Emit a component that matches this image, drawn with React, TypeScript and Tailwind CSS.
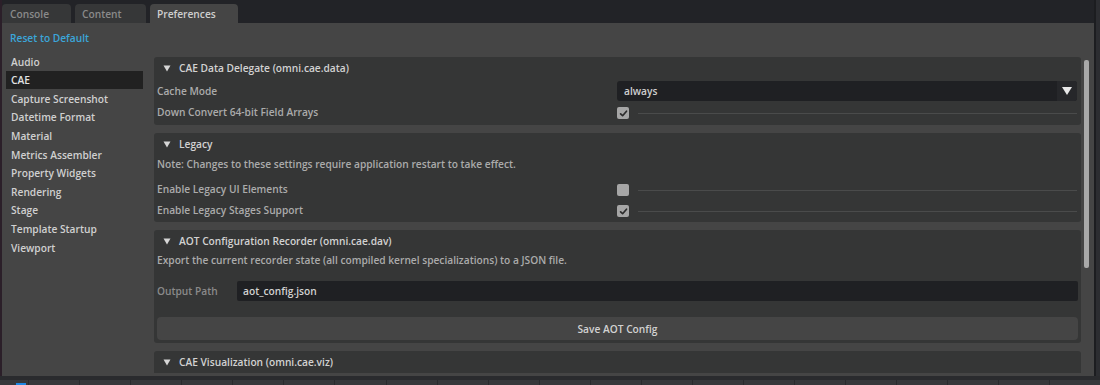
import React from "react";

const sidebarItems = [
  "Audio",
  "CAE",
  "Capture Screenshot",
  "Datetime Format",
  "Material",
  "Metrics Assembler",
  "Property Widgets",
  "Rendering",
  "Stage",
  "Template Startup",
  "Viewport",
];

function Caret() {
  return (
    <svg width="8" height="7" viewBox="0 0 8 7" className="mr-[8px] shrink-0">
      <path d="M0.5 0.5 H7.5 L4 6.5 Z" fill="#d6d6d6" />
    </svg>
  );
}

function SectionHeader({ title }: { title: string }) {
  return (
    <div className="flex h-[21px] items-center pl-[9px] pt-[2px] text-[#d2d2d2]">
      <Caret />
      <span>{title}</span>
    </div>
  );
}

function Checkbox({ checked }: { checked: boolean }) {
  return (
    <div className="flex h-full flex-1 items-center">
      <div className="flex h-[12px] w-[12px] items-center justify-center rounded-[2px] bg-[#a6a6a6]">
        {checked && (
          <svg width="9" height="9" viewBox="0 0 9 9">
            <path
              d="M1.6 4.8 L3.6 6.7 L7.5 2.2"
              fill="none"
              stroke="#2c2c2c"
              strokeWidth="1.7"
              strokeLinecap="round"
              strokeLinejoin="round"
            />
          </svg>
        )}
      </div>
      <div className="ml-[9px] h-px flex-1 bg-[#4a4b4b]" />
    </div>
  );
}

function Row({ label, children }: { label: string; children: React.ReactNode }) {
  return (
    <div className="flex h-[20px] items-center pt-[2px]">
      <div className="w-[460px] shrink-0 text-[#ababab]">{label}</div>
      {children}
    </div>
  );
}

export default function App() {
  return (
    <div
      className="flex h-[385px] w-[1100px] flex-col overflow-hidden bg-[#222327] text-[10.2px] font-semibold"
      style={{ fontFamily: '"Open Sans", "Liberation Sans", sans-serif' }}
    >
      <div className="flex h-[376px]">
        <div className="w-[2px] bg-[#2b1f29]" />
        <div className="flex w-[1092px] flex-col">
          {/* tab bar */}
          <div className="flex h-[23px] items-end gap-[4px]">
            <div className="flex h-[19px] w-[69px] items-center rounded-t-[4px] bg-[#363738] pl-[8px] pt-[2px] text-[#8a8a8a]">
              Console
            </div>
            <div className="flex h-[19px] w-[71px] items-center rounded-t-[4px] bg-[#363738] pl-[7px] pt-[2px] text-[#8a8a8a]">
              Content
            </div>
            <div className="flex h-[19px] w-[88px] items-center rounded-t-[4px] bg-[#454545] pl-[7px] pt-[2px] text-[#cfcfcf]">
              Preferences
            </div>
          </div>

          {/* body */}
          <div className="flex flex-1 flex-col overflow-hidden bg-[#454545] pb-[3px]">
            <div className="mt-[8px] flex h-[14px] items-center pl-[8px] pt-[2px] text-[#3ba6da]">Reset to Default</div>
            <div className="mt-[7px] flex min-h-0 flex-1">
              {/* sidebar */}
              <div className="ml-[4px] w-[137px] shrink-0">
                {sidebarItems.map((item) => (
                  <div
                    key={item}
                    className={
                      item === "CAE"
                        ? "flex h-[18.6px] items-center bg-[#212121] pl-[5px] pt-[2px] text-[#e2e2e2]"
                        : "flex h-[18.6px] items-center pl-[5px] pt-[2px] text-[#d0d0d0]"
                    }
                  >
                    {item}
                  </div>
                ))}
              </div>

              {/* content */}
              <div className="ml-[11px] flex min-h-0 flex-1 flex-col gap-[8px] overflow-hidden pt-[5px]">
                <div className="rounded-[3px] bg-[#353636] pb-[3px] pr-[4px]">
                  <SectionHeader title="CAE Data Delegate (omni.cae.data)" />
                  <div className="flex flex-col gap-[1px] pl-[3px] pt-[3px]">
                    <div className="flex h-[20px] items-center">
                      <div className="w-[460px] shrink-0 pt-[2px] text-[#ababab]">Cache Mode</div>
                      <div className="flex h-[20px] flex-1 items-center rounded-[3px] bg-[#1f2023]">
                        <span className="flex-1 pl-[7px] pt-[2px] text-[#cfcfcf]">always</span>
                        <div className="flex h-full w-[20px] items-center justify-center rounded-r-[3px] bg-[#26272a]">
                          <svg width="10" height="8" viewBox="0 0 10 8">
                            <path d="M0 0 H10 L5 8 Z" fill="#e8e8e8" />
                          </svg>
                        </div>
                      </div>
                    </div>
                    <Row label="Down Convert 64-bit Field Arrays">
                      <Checkbox checked />
                    </Row>
                  </div>
                </div>

                <div className="rounded-[3px] bg-[#353636] pb-[2px] pr-[4px]">
                  <SectionHeader title="Legacy" />
                  <div className="mt-[1px] flex h-[18px] items-center pl-[3px] pt-[2px] text-[#ababab]">
                    Note: Changes to these settings require application restart to take effect.
                  </div>
                  <div className="mt-[6px] flex flex-col gap-[1px] pl-[3px]">
                    <Row label="Enable Legacy UI Elements">
                      <Checkbox checked={false} />
                    </Row>
                    <Row label="Enable Legacy Stages Support">
                      <Checkbox checked />
                    </Row>
                  </div>
                </div>

                <div className="rounded-[3px] bg-[#353636] pb-[3px] pr-[3px]">
                  <SectionHeader title="AOT Configuration Recorder (omni.cae.dav)" />
                  <div className="flex h-[18px] items-center pl-[3px] pt-[2px] text-[#ababab]">
                    Export the current recorder state (all compiled kernel specializations) to a JSON file.
                  </div>
                  <div className="mt-[12px] flex h-[20px] items-center pl-[3px]">
                    <div className="w-[80px] shrink-0 pt-[2px] text-[#8a8a8a]">Output Path</div>
                    <div className="flex h-[20px] flex-1 items-center rounded-[2px] bg-[#1f2023] pl-[6px] pt-[2px] text-[#d2d2d2]">
                      aot_config.json
                    </div>
                  </div>
                  <div className="mt-[16px] pl-[3px]">
                    <div className="flex h-[23px] items-center justify-center rounded-[4px] bg-[#454545] pt-[2px] text-[#d2d2d2]">
                      Save AOT Config
                    </div>
                  </div>
                </div>

                <div className="shrink-0 rounded-[3px] bg-[#353636] pb-[3px] pr-[3px]">
                  <SectionHeader title="CAE Visualization (omni.cae.viz)" />
                  <div className="h-[40px]" />
                </div>
              </div>

              {/* scrollbar */}
              <div className="ml-[3px] mr-[5px] w-[5px] shrink-0 pt-[8px]">
                <div className="h-[208px] rounded-[2px] bg-[#a9a9a9]" />
              </div>
            </div>
          </div>
        </div>
        <div className="w-[2px] bg-[#1c1d20]" />
        <div className="flex-1 bg-[#2c2d31]" />
      </div>

      {/* bottom strip */}
      <div className="h-[4px] bg-[#2a2b2e]" />
      <div className="flex h-[5px] bg-[#37383b]">
        <div className="w-[16px]" />
        <div className="mt-[3px] h-[2px] w-[11px] bg-[#1e88e5]" />
        <div className="w-[2px]" />
        {Array.from({ length: 21 }).map((_, i) => (
          <div key={i} className="w-[52.5px] border-l border-[#2a2b2e]" />
        ))}
      </div>
    </div>
  );
}
